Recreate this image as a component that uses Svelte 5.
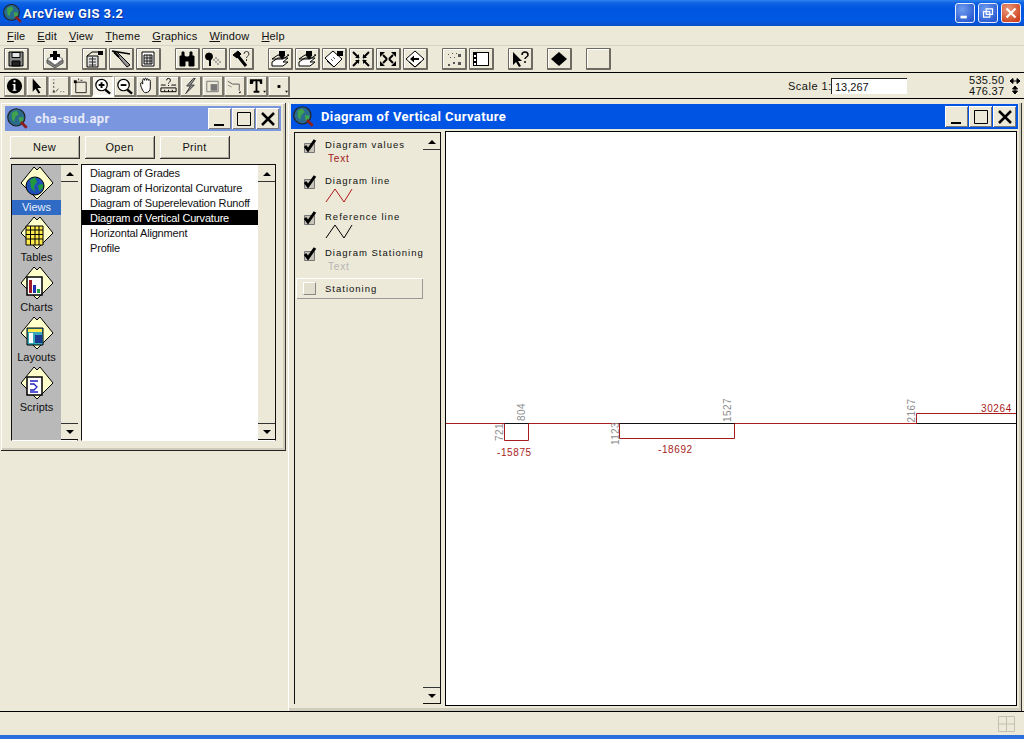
<script>
  const p = (d, fill = 'none', stroke = '#000', sw = 1) => ({ d, fill, stroke, sw });
  const k = '#000';

  const layers = [
    p('M2 12 8 8h10l-5 4 5 0-5 4H2z', '#fff'),
    p('M2 9 8 5h3M17 5l2 0-6 4H2', 'none'),
    p('M12 1v6M9 5l3 4 3-4z', k),
    p('M9 1h6v4H9z', k, 'none')
  ];

  const row1 = [
    [{ i: [p('M3 2h14v14H3z', '#8a8a8a'), p('M6 2.500h8v5H6z', '#e4e4e4'), p('M6 11h8v5H6z', '#222')] }],
    [{ i: [p('M2 9 10 5l8 4-8 6z', '#fff', '#777'), p('M2 10v3l8 5 8-5v-3l-8 6z', '#8a8a8a', '#555'), p('M8 1h4v3h3v3h-3v3H8V7H5V4h3z', k, 'none')] }],
    [
      { i: [p('M3 6h11v11H3z', '#ddd'), p('M5 9h7M5 12h7M5 15h7M8.500 7v10', 'none', '#333'), p('M14 1h5v4h-5z', k, 'none'), p('M3 6 8 2h6', 'none')] },
      { i: [p('M1 1 19 4', 'none', k, 1.500), p('M3 2l3 0 13 13-3 2z', '#999'), p('M3 2l5 5', 'none', k, 2)] },
      { i: [p('M4 2h12v14H4z', '#fff'), p('M6 5h8v9H6z', '#ddd'), p('M6 8h8M6 11h8M9 5v9M12 5v9', 'none', '#222')] }
    ],
    [
      { i: [p('M3 6h5v10H3zM12 6h5v10h-5z', k), p('M5 2h2v5H5zM13 2h2v5h-2zM8 7h4v4H8z', k)] },
      { i: [p('M5 3a3.500 3.500 0 1 1 0 7 3.500 3.500 0 1 1 0-7z', k), p('M6 10v6', 'none', k, 2), p('M11 8l2 0M13 10h2M15 12h2M11 12h2M13 14h2M9 10h2', 'none', '#666')] },
      { i: [p('M2 5 7 1l3 3-4 4z', k), p('M7 6l8 10', 'none', k, 3), p('M13 4a2.500 2.500 0 0 1 5 0c0 2-2.500 2-2.500 4M15.500 9v2', 'none', '#333')] }
    ],
    [
      { i: layers },
      { i: layers },
      { i: [p('M1 8 9 1l9 8-8 8z', '#fff'), p('M3 11 10 17M17 4l2-3', 'none'), p('M13 1h6v5h-6z', k, 'none'), p('M7 9l2 2M9 7l2 2', 'none', '#555')] },
      { i: [p('M2 2 8 8M18 2l-6 6M2 16l6-6M18 16l-6-6', 'none', k, 2), p('M4 8h4V4zM16 8h-4V4zM4 10h4v4zM16 10h-4v4z', k, 'none')] },
      { i: [p('M5 5l4 4M15 5l-4 4M5 13l4-4M15 13l-4-4', 'none', k, 2), p('M2 2h5L2 7zM18 2h-5l5 5zM2 16h5l-5-5zM18 16h-5l5-5z', k, 'none')] },
      { i: [p('M10 1 19 9 10 17 1 9z', '#fff'), p('M4 12 10 17M16 12l-6 5', 'none'), p('M5 9l4-3.500V8h5v2H9v2.500z', k, 'none')] }
    ],
    [
      { i: [p('M4 4h1v1H4zM8 3h1v1H8zM12 3h1v1h-1zM6 7h1v1H6zM10 7h1v1h-1zM4 14h2v2H4zM9 12h2v2H9zM14 4h3v3h-3zM14 12h3v3h-3z', '#555', 'none')] },
      { i: [p('M2 2h16v14H2z', k, 'none'), p('M6 3h11v12H6z', '#fff', 'none'), p('M3 5h2v2H3zM3 9h2v2H3zM3 13h2v2H3z', '#fff', 'none')] }
    ],
    [{ i: [p('M3 2v13l3-3 3 5 2-1-3-5h4z', k, 'none'), p('M12 5a3 3 0 0 1 6 0c0 2-3 2-3 4M15 11v2', 'none', k, 1.500)] }],
    [{ i: [p('M10 2 18 9 10 16 2 9z', k, 'none')] }],
    [{ i: [] }]
  ];

  const row2 = [
    { i: [p('M10 1a8 8 0 1 1 0 16 8 8 0 1 1 0-16z', k, 'none'), p('M9 3h2v2H9zM8 7h3v6h1v1H8v-1h1V8H8z', '#fff', 'none')] },
    { i: [p('M6 1v14l3-3 3 5 2-1-3-5h4z', k, 'none')] },
    { i: [p('M5 2v1M5 5v2M5 9v2M5 13v2h1M7 15l3-3M12 15h1M15 15h1', 'none', '#444'), p('M4 14h2v2H4z', '#444', 'none')] },
    { i: [p('M5 5h11v11H5z', 'none', '#222'), p('M3 3h3v3H3z', k, 'none'), p('M8 1v2M10 3h2', 'none', '#333')] },
    { active: true, i: [p('M9 2a6 6 0 1 1 0 12 6 6 0 1 1 0-12z', '#fff', k, 1.300), p('M6 8h6M9 5v6', 'none', k, 2), p('M13 13l5 4', 'none', k, 2.500)] },
    { i: [p('M9 2a6 6 0 1 1 0 12 6 6 0 1 1 0-12z', '#fff', k, 1.300), p('M6 8h6', 'none', k, 2), p('M13 13l5 4', 'none', k, 2.500)] },
    { i: [p('M4 8c-1-3 1-3 2-1V3c0-2 2-2 2 0 0-3 2-3 2 0 0-2 2-2 2 0 0-1 2-1 2 1v7c0 3-2 5-5 5-2 0-3-2-5-7z', '#fff')] },
    { i: [p('M2 11h16M2 15h16M2 11v4M18 11v4M6 13v2M10 13v2M14 13v2', 'none'), p('M2 8h5M13 8h5', 'none'), p('M8 3a2 2 0 0 1 4 0c0 2-2 2-2 3.500M10 8v1', 'none')] },
    { i: [p('M13 1 6 9h4l-5 8 9-9h-4l5-7z', '#999', '#333')] },
    { i: [p('M4 4h12v11H4z', 'none', '#777'), p('M8 7h7v7H8z', '#777', 'none')] },
    { i: [p('M3 4l5 3h7v7', 'none', '#555', 1), p('M16 15v1h-1z', k), p('M3 8l4 2', 'none', '#888')] },
    { i: [p('M3 2h13v5h-2l-1-3h-2v10h2v2H7v-2h2V4H7L6 7H3z', k, 'none'), p('M17 14h3l-1.500 2z', k, 'none')] },
    { i: [p('M9 8h3v3H9z', k, 'none'), p('M17 14h3l-1.500 2z', k, 'none')] }
  ];

  const menus = [
    ['F', 'ile'], ['E', 'dit'], ['V', 'iew'], ['T', 'heme'], ['G', 'raphics'], ['W', 'indow'], ['H', 'elp']
  ];
  const sections = ['Views', 'Tables', 'Charts', 'Layouts', 'Scripts'];
  const docs = [
    'Diagram of Grades',
    'Diagram of Horizontal Curvature',
    'Diagram of Superelevation Runoff',
    'Diagram of Vertical Curvature',
    'Horizontal Alignment',
    'Profile'
  ];
  const legend = [
    { label: 'Diagram values', sample: 'Text', color: '#a01a1a' },
    { label: 'Diagram line', line: '#b01818' },
    { label: 'Reference line', line: '#000' },
    { label: 'Diagram Stationing', sample: 'Text', color: '#b5b5b5' }
  ];
  const rotated = [
    { x: 503, y: 432, t: '721' },
    { x: 525, y: 412, t: '804' },
    { x: 619, y: 433.500, t: '1123' },
    { x: 731, y: 410, t: '1527' },
    { x: 915, y: 410.500, t: '2167' }
  ];
</script>

{#snippet appIcon(size)}
  <svg class="app-icon" viewBox="0 0 20 20" width={size} height={size}>
    <circle cx="9" cy="9" r="7.500" fill="#2a6a8c" stroke="#222" />
    <path d="M5 5l4-2 2 3-3 3-1 4-2-3zM11 9l4 0 0 3-3 2z" fill="#3fa34d" />
    <path d="M13 13l5 5" stroke="#8a1f1f" stroke-width="2.500" />
  </svg>
{/snippet}

{#snippet glyph(shapes)}
  <svg viewBox="0 0 20 18" width="20" height="18">
    {#each shapes as s}
      <path d={s.d} fill={s.fill} stroke={s.stroke} stroke-width={s.sw} />
    {/each}
  </svg>
{/snippet}

{#snippet winButtons()}
  <div class="win-btns">
    <button class="win-btn"><svg viewBox="0 0 16 16" width="16" height="16"><path d="M2 13h10v2H2z" /></svg></button>
    <button class="win-btn"><svg viewBox="0 0 16 16" width="16" height="16"><path d="M1.500 1.500h13v13h-13z" fill="none" stroke="#000" /></svg></button>
    <button class="win-btn"><svg viewBox="0 0 16 16" width="16" height="16"><path d="M2 2l12 12M14 2 2 14" stroke="#000" stroke-width="2.500" /></svg></button>
  </div>
{/snippet}

{#snippet scrollbar()}
  <div class="scroll">
    <div class="arrow top"><span class="tri up"></span></div>
    <div class="track"></div>
    <div class="arrow bottom"><span class="tri down"></span></div>
  </div>
{/snippet}

{#snippet sectionIcon(name)}
  <svg class="section-icon" viewBox="0 0 34 36" width="34" height="36">
    <path d="M1 18 14 2l3 3 3-3 13 16-16 16z" fill="#ffffcc" stroke="#000" />
    {#if name === 'Views'}
      <circle cx="15" cy="21" r="9" fill="#1f4fb8" stroke="#000" />
      <path d="M10 15l5-3 2 5-3 4 1 6-4-4zM18 20l5-1 0 4-4 3z" fill="#1f9a3e" />
    {:else if name === 'Tables'}
      <path d="M6 11h17v19H6z" fill="#ffe94d" stroke="#000" />
      <path d="M6 15h17M6 19.500h17M6 24h17M10.500 11v19M15 11v19M19 11v19" stroke="#000" />
    {:else if name === 'Charts'}
      <path d="M7 12h15v18H7z" fill="#fff" stroke="#000" stroke-width="1.500" />
      <path d="M9 15h3v13H9z" fill="#a01a2a" /><path d="M13 20h3v8h-3z" fill="#2030b0" /><path d="M17 24h3v4h-3z" fill="#20a040" />
    {:else if name === 'Layouts'}
      <path d="M7 13h16v17H7z" fill="#38a8b8" stroke="#000" />
      <path d="M8 14h14v3H8z" fill="#ffe94d" /><path d="M9 18h4v10H9z" fill="#fff" /><path d="M15 20h7v8h-7z" fill="#1a3a90" />
    {:else}
      <path d="M7 12h15v18H7z" fill="#fff" stroke="#000" stroke-width="1.500" />
      <path d="M10 16h8M10 19h4l3 3-3 3h-4M10 27h8" fill="none" stroke="#2020c0" stroke-width="1.300" />
    {/if}
  </svg>
{/snippet}

<div class="app">
  <header class="titlebar">
    {@render appIcon(21)}
    <span class="title">ArcView GIS 3.2</span>
    <div class="xp-btns">
      <button class="xp blue"><svg viewBox="0 0 20 20" width="20" height="20"><path d="M5 13h7v3H5z" fill="#fff" /></svg></button>
      <button class="xp blue"><svg viewBox="0 0 20 20" width="20" height="20"><path d="M8 5.500h7v6H8zM5 8.500h7v6H5z" fill="none" stroke="#fff" stroke-width="1.300" /></svg></button>
      <button class="xp red"><svg viewBox="0 0 20 20" width="20" height="20"><path d="M5 5l10 10M15 5 5 15" stroke="#fff" stroke-width="2.200" /></svg></button>
    </div>
  </header>

  <nav class="menubar">
    {#each menus as m}
      <span class="menu"><u>{m[0]}</u>{m[1]}</span>
    {/each}
  </nav>

  <div class="toolbar">
    {#each row1 as group}
      <div class="group">
        {#each group as b}
          <button class="tool">{@render glyph(b.i)}</button>
        {/each}
      </div>
    {/each}
  </div>

  <div class="toolbar2">
    <div class="group tight">
      {#each row2 as b}
        <button class="tool small" class:active={b.active}>{@render glyph(b.i)}</button>
      {/each}
    </div>
    <div class="scale">
      <span class="scale-label">Scale 1:</span>
      <span class="scale-input">13,267</span>
    </div>
    <div class="coords">
      <span>535.50</span><span>476.37</span>
    </div>
    <svg class="coord-arrows" viewBox="0 0 12 20" width="12" height="20">
      <path d="M1 5h10M1 5l3-2.500v5zM11 5 8 2.500v5zM6 10v8M6 10l-2.500 3h5zM6 18l-2.500-3h5z" stroke="#000" />
    </svg>
  </div>

  <main class="desktop">
    <section class="window project">
      <div class="win-title inactive">
        {@render appIcon(23)}
        <span class="win-name">cha-sud.apr</span>
        {@render winButtons()}
      </div>
      <div class="actions">
        <button class="action">New</button>
        <button class="action">Open</button>
        <button class="action">Print</button>
      </div>
      <div class="project-body">
        <div class="sections">
          <div class="section-list">
            {#each sections as s, i}
              <div class="section">
                {@render sectionIcon(s)}
                <span class="section-name" class:current={i === 0}>{s}</span>
              </div>
            {/each}
          </div>
          {@render scrollbar()}
        </div>
        <div class="docs">
          <div class="doc-list">
            {#each docs as d, i}
              <div class="doc" class:selected={i === 3}>{d}</div>
            {/each}
          </div>
          {@render scrollbar()}
        </div>
      </div>
    </section>

    <section class="window view">
      <div class="win-title">
        {@render appIcon(23)}
        <span class="win-name">Diagram of Vertical Curvature</span>
        {@render winButtons()}
      </div>
      <div class="view-body">
        <div class="toc">
          <div class="toc-list">
            {#each legend as l}
              <div class="theme">
                <svg class="check" viewBox="0 0 14 14" width="14" height="14">
                  <path d="M1.500 4.500h10v9h-10z" fill="#c8c5b8" stroke="#777" />
                  <path d="M2 7l3 4 7-10" fill="none" stroke="#000" stroke-width="3" />
                </svg>
                <div class="theme-text">
                  <div class="theme-label">{l.label}</div>
                  {#if l.sample}
                    <div class="sample" style="color:{l.color}">{l.sample}</div>
                  {:else}
                    <svg class="zig" viewBox="0 0 28 15" width="28" height="15">
                      <path d="M1 14 10 1l9 13 8-13" fill="none" stroke={l.line} />
                    </svg>
                  {/if}
                </div>
              </div>
            {/each}
            <div class="theme-row">
              <span class="box"></span>
              <span class="theme-label">Stationing</span>
            </div>
          </div>
          {@render scrollbar()}
        </div>
        <div class="canvas">
          <svg viewBox="446 132 570 573" width="570" height="573">
            <path d="M445 423.500h472" stroke="#a81c1c" />
            <path d="M504.500 423.500h24M619.500 423.500h115M917 423.500h99" stroke="#111" />
            <path d="M504.500 424v16.500h24V424M619.500 424v14.500h115V424M916.500 423V413.500H1016" fill="none" stroke="#a81c1c" />
            {#each rotated as r}
              <text class="rot" x={r.x} y={r.y} text-anchor="middle" transform="rotate(-90 {r.x} {r.y})">{r.t}</text>
            {/each}
            <text class="red" x="497" y="456">-15875</text>
            <text class="red" x="658" y="453">-18692</text>
            <text class="red" x="981" y="412">30264</text>
          </svg>
        </div>
      </div>
    </section>
  </main>

  <footer class="status">
    <svg viewBox="0 0 17 16" width="17" height="16">
      <path d="M.5.500h16v15H.5zM8.500.500v15M.5 8h16" fill="none" stroke="#c4c1b2" />
    </svg>
  </footer>
  <div class="taskbar"></div>
</div>

<style>
  :global(body) {
    margin: 0;
    background: #ece9d8;
  }

  .app {
    width: 1024px;
    height: 739px;
    display: flex;
    flex-direction: column;
    overflow: hidden;
    background: #ece9d8;
    font-family: "Liberation Sans", Arial, sans-serif;
    font-size: 11px;
    color: #111;
  }

  button {
    padding: 0;
    margin: 0;
    font: inherit;
    color: inherit;
    display: flex;
    align-items: center;
    justify-content: center;
  }

  .titlebar {
    height: 26px;
    flex: none;
    display: flex;
    align-items: center;
    padding: 0 3px 0 2px;
    box-sizing: border-box;
    background: linear-gradient(#2f83ee 0, #0f62e2 3px, #0055e0 9px, #0158e4 20px, #0a4fc8 26px);
  }

  .app-icon {
    flex: none;
  }

  .title {
    color: #fff;
    font: bold 13px Roboto, sans-serif;
    letter-spacing: 0.4px;
    text-shadow: 1px 1px 0 #0a2f90;
  }

  .xp-btns {
    margin-left: auto;
    display: flex;
    gap: 3px;
  }

  .xp {
    width: 20px;
    height: 20px;
    border: 1px solid #e8eefc;
    border-radius: 3px;
  }

  .xp.blue {
    background: radial-gradient(circle at 35% 30%, #6f9df0, #2a5ad0 80%);
  }

  .xp.red {
    background: radial-gradient(circle at 35% 30%, #ea9a7c, #cf4420 80%);
  }

  .menubar {
    height: 20px;
    flex: none;
    display: flex;
    align-items: center;
    padding-left: 7px;
    gap: 12px;
    box-sizing: border-box;
    border-bottom: 1px solid #d8d5c4;
  }

  .menu {
    letter-spacing: 0.15px;
  }

  .toolbar {
    height: 27px;
    flex: none;
    display: flex;
    gap: 14px;
    padding: 2px 0 0 4px;
    box-sizing: border-box;
    border-bottom: 1px solid #000;
  }

  .group {
    display: flex;
    gap: 2px;
  }

  .group.tight {
    gap: 0;
  }

  .tool {
    width: 25px;
    height: 22px;
    background: #ece9d8;
    border: 1px solid #6e6c62;
    border-right-width: 2px;
    border-bottom-width: 2px;
    border-radius: 1px;
    box-shadow: inset 1px 1px 0 #fff;
  }

  .tool.small {
    width: 22px;
    height: 21px;
    border-color: #b0ad9e;
    border-right-color: #77756a;
    border-bottom-color: #77756a;
  }

  .tool.active {
    background: #f6f4ea;
    border-color: #77756a #fff #fff #77756a;
    box-shadow: none;
  }

  .toolbar2 {
    height: 26px;
    flex: none;
    display: flex;
    align-items: center;
    padding: 1px 0 0 4px;
    box-sizing: border-box;
    border-bottom: 1px solid #000;
  }

  .scale {
    margin-left: 498px;
    display: flex;
    flex: none;
    align-items: center;
    gap: 2px;
    width: 119px;
  }

  .scale-label {
    width: 41px;
    flex: none;
    white-space: nowrap;
    letter-spacing: 0.5px;
  }

  .scale-input {
    width: 76px;
    height: 16px;
    line-height: 16px;
    padding-left: 3px;
    box-sizing: border-box;
    background: #fff;
    border-top: 1px solid #222;
    border-left: 1px solid #222;
  }

  .coords {
    margin-left: 62px;
    display: flex;
    flex-direction: column;
    line-height: 11px;
    letter-spacing: 0.3px;
  }

  .coord-arrows {
    margin-left: 5px;
  }

  .desktop {
    position: relative;
    flex: 1;
    min-height: 0;
    border-bottom: 1px solid #000;
  }

  .window {
    position: absolute;
    box-sizing: border-box;
    background: #ece9d8;
    display: flex;
    flex-direction: column;
  }

  .window.project {
    left: 1px;
    top: 4px;
    width: 285px;
    height: 348px;
    padding: 3px 4px 0 4px;
    border-right: 1px solid #333;
    border-bottom: 1px solid #222;
    box-shadow: inset 1px 1px 0 #fff, inset -2px -2px 0 #cfccbc;
  }

  .window.view {
    left: 288px;
    top: 4px;
    width: 734px;
    height: 608px;
    padding: 1px 3px 0 2px;
    border-left: 1px solid #fff;
    border-right: 1px solid #333;
    box-shadow: inset -2px -3px 0 #cfccbc;
  }

  .win-title {
    height: 25px;
    flex: none;
    display: flex;
    align-items: center;
    background: #0054e3;
    color: #fff;
    padding-left: 1px;
  }

  .win-title.inactive {
    background: #7a96df;
    color: #e6eaf8;
  }

  .win-name {
    margin-left: 6px;
    font: bold 13px Roboto, sans-serif;
    letter-spacing: 0.4px;
  }

  .win-btns {
    margin-left: auto;
    display: flex;
    gap: 1px;
    padding-right: 2px;
  }

  .win-btn {
    width: 23px;
    height: 21px;
    background: #ece9d8;
    border: none;
    box-shadow: inset 1px 1px 0 #fff, inset -1px -1px 0 #777;
  }

  .actions {
    display: flex;
    gap: 5px;
    padding: 5px 0 0 5px;
  }

  .action {
    width: 70px;
    height: 23px;
    background: #ece9d8;
    border: none;
    border-right: 1px solid #333;
    border-bottom: 1px solid #333;
    box-shadow: inset 1px 1px 0 #fff, inset -1px -1px 0 #aaa798;
    letter-spacing: 0.3px;
  }

  .project-body {
    display: flex;
    gap: 3px;
    padding: 5px 0 0 6px;
  }

  .sections,
  .docs {
    display: flex;
    height: 277px;
    box-sizing: border-box;
    border: 1px solid #111;
    border-bottom-color: #fff;
  }

  .sections {
    width: 67px;
  }

  .docs {
    width: 195px;
  }

  .section-list {
    width: 49px;
    flex: none;
    background: #b9b9b9;
  }

  .section {
    height: 50px;
    display: flex;
    flex-direction: column;
    align-items: center;
  }

  .section-icon {
    flex: none;
  }

  .section-name {
    align-self: stretch;
    text-align: center;
    height: 15px;
    line-height: 15px;
    margin-top: -1px;
  }

  .section-name.current {
    background: #2f6bc4;
    color: #e8eefc;
  }

  .doc-list {
    flex: 1;
    background: #fff;
  }

  .doc {
    height: 15px;
    line-height: 16px;
    padding-left: 8px;
    letter-spacing: -0.18px;
    white-space: nowrap;
  }

  .doc.selected {
    background: #000;
    color: #fff;
  }

  .scroll {
    width: 17px;
    flex: none;
    display: flex;
    flex-direction: column;
    background: #ece9d8;
  }

  .track {
    flex: 1;
  }

  .arrow {
    height: 17px;
    flex: none;
    display: flex;
    align-items: center;
    justify-content: center;
  }

  .arrow.top {
    box-shadow: inset 0 -1px 0 #333;
  }

  .arrow.bottom {
    box-shadow: inset 0 1px 0 #333, inset 0 -1px 0 #111;
  }

  .tri {
    width: 0;
    height: 0;
    border-left: 4px solid transparent;
    border-right: 4px solid transparent;
  }

  .tri.up {
    border-bottom: 4px solid #000;
  }

  .tri.down {
    border-top: 4px solid #000;
  }

  .view-body {
    flex: 1;
    min-height: 0;
    display: flex;
    padding: 2px 0 0 3px;
    gap: 4px;
  }

  .toc {
    width: 147px;
    height: 572px;
    margin-top: 1px;
    flex: none;
    display: flex;
    box-sizing: border-box;
    border-left: 1px solid #111;
    border-top: 1px solid #111;
    border-right: 1px solid #111;
  }

  .toc-list {
    flex: 1;
    min-width: 0;
    padding-top: 5px;
  }

  .theme {
    height: 36px;
    display: flex;
    gap: 8px;
    padding-left: 8px;
  }

  .check {
    margin-top: 1px;
    flex: none;
  }

  .theme-text {
    display: flex;
    flex-direction: column;
  }

  .theme-label {
    font-size: 9.500px;
    line-height: 14px;
    letter-spacing: 1px;
    white-space: nowrap;
  }

  .sample {
    font-size: 10px;
    line-height: 13px;
    margin-left: 3px;
    letter-spacing: 0.800px;
  }

  .theme-row {
    height: 21px;
    display: flex;
    align-items: center;
    gap: 9px;
    padding-left: 7px;
    margin: -4px 0 0 1px;
    box-sizing: border-box;
    box-shadow: inset 1px 1px 0 #fff, inset -1px -1px 0 #999;
  }

  .box {
    width: 11px;
    height: 11px;
    border-top: 1px solid #fff;
    border-left: 1px solid #fff;
    border-right: 1px solid #888;
    border-bottom: 1px solid #888;
    background: #e2dfce;
  }

  .canvas {
    width: 572px;
    height: 575px;
    flex: none;
    box-sizing: border-box;
    background: #fff;
    border: 1px solid #000;
    overflow: hidden;
  }

  .canvas svg {
    display: block;
  }

  .rot {
    font: 10px "Liberation Sans", sans-serif;
    fill: #8d8d8d;
    letter-spacing: 0.4px;
  }

  .red {
    font: 10px "Liberation Sans", sans-serif;
    fill: #a81c1c;
    letter-spacing: 0.600px;
  }

  .status {
    height: 23px;
    flex: none;
    display: flex;
    align-items: center;
    justify-content: flex-end;
    padding-right: 9px;
  }

  .taskbar {
    height: 4px;
    flex: none;
    background: #2a6fdc;
  }
</style>
